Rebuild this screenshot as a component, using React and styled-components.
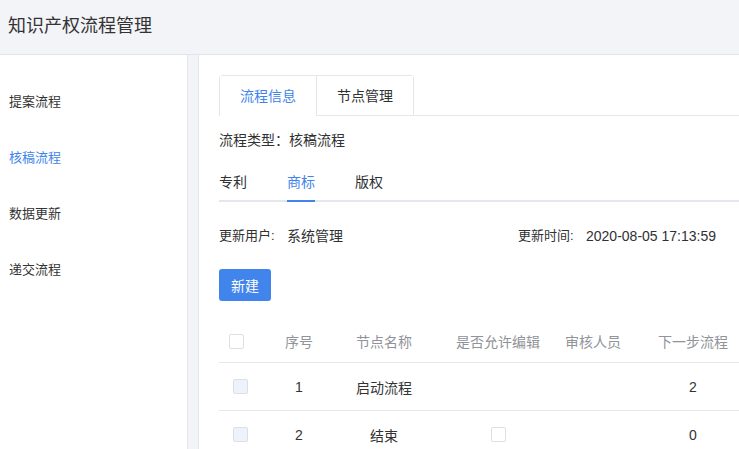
import React, { useState } from 'react';
import styled, { createGlobalStyle } from 'styled-components';

const GlobalStyle = createGlobalStyle`
  html, body {
    margin: 0;
    padding: 0;
    background: #f3f4f8;
    font-family: "Liberation Sans", "Noto Sans CJK SC", sans-serif;
    color: #303133;
    overflow: hidden;
  }
`;

const Page = styled.div`
  width: 739px;
  height: 449px;
  overflow: hidden;
  display: flex;
  flex-direction: column;
`;

const Header = styled.header`
  height: 55px;
  flex: none;
  border-bottom: 1px solid #e3e4e8;
  display: flex;
  align-items: center;
  padding: 0 8px 7px;
  box-sizing: border-box;
  font-size: 18px;
  color: #333;
`;

const Body = styled.div`
  flex: 1;
  display: flex;
  gap: 10px;
  min-height: 0;
`;

const Sidebar = styled.nav`
  width: 188px;
  flex: none;
  background: #fff;
  border-right: 1px solid #e6e6ea;
  padding-top: 19px;
  box-sizing: border-box;
`;

const NavItem = styled.div`
  height: 56px;
  line-height: 56px;
  padding-left: 9px;
  font-size: 13px;
  color: ${p => (p.$active ? '#4084ec' : '#333')};
  cursor: pointer;
`;

const Main = styled.main`
  flex: 1;
  min-width: 0;
  background: #fff;
  border-left: 1px solid #e6e6ea;
  padding: 20px 0 0 20px;
  overflow: hidden;
`;

const CardTabs = styled.div`
  display: flex;
  border-bottom: 1px solid #e4e7ed;
  height: 40px;
  margin-right: -20px;
`;

const CardTabGroup = styled.div`
  display: flex;
  border: 1px solid #e4e7ed;
  border-bottom: none;
  border-radius: 4px 4px 0 0;
  height: 40px;
  box-sizing: border-box;
`;

const CardTab = styled.div`
  width: 96px;
  height: 40px;
  box-sizing: border-box;
  text-align: center;
  line-height: 40px;
  font-size: 14px;
  color: ${p => (p.$active ? '#4084ec' : '#303133')};
  background: #fff;
  border-left: ${p => (p.$first ? 'none' : '1px solid #e4e7ed')};
  margin-bottom: ${p => (p.$active ? '0' : '-1px')};
  cursor: pointer;
  & + & {
    width: 97px;
    border-bottom: 1px solid #e4e7ed;
  }
`;

const TypeLine = styled.div`
  margin-top: 14px;
  font-size: 14px;
  line-height: 20px;
  color: #303133;
`;

const SubTabs = styled.div`
  margin-top: 14px;
  display: flex;
  gap: 40px;
  border-bottom: 2px solid #e4e7ed;
  margin-right: -20px;
`;

const SubTab = styled.div`
  width: 28px;
  height: 36px;
  line-height: 36px;
  font-size: 14px;
  color: ${p => (p.$active ? '#4084ec' : '#303133')};
  border-bottom: 2px solid ${p => (p.$active ? '#4084ec' : 'transparent')};
  margin-bottom: -2px;
  white-space: nowrap;
  cursor: pointer;
`;

const InfoRow = styled.div`
  margin-top: 24px;
  display: grid;
  grid-template-columns: 299px auto;
  font-size: 13px;
  line-height: 20px;
`;

const InfoItem = styled.div`
  display: flex;
  white-space: nowrap;
`;

const InfoLabel = styled.span`
  width: 68px;
  color: #303133;
`;

const InfoValue = styled.span`
  color: #303133;
  font-size: 14px;
`;

const Button = styled.button`
  margin-top: 23px;
  width: 52px;
  height: 32px;
  border: none;
  border-radius: 3px;
  background: #4084ec;
  color: #fff;
  font-family: inherit;
  font-size: 14px;
  cursor: pointer;
  display: block;
`;

const Table = styled.div`
  margin-top: 18px;
  width: 600px;
`;

const Row = styled.div`
  display: grid;
  grid-template-columns: 40px 80px 90px 138px 52px 148px 52px;
  height: ${p => (p.$head ? '44px' : '48px')};
  border-bottom: 1px solid #e6e8ec;
  box-sizing: border-box;
  font-size: 14px;
  color: ${p => (p.$head ? '#909399' : '#333')};
`;

const Cell = styled.div`
  display: flex;
  align-items: center;
  justify-content: center;
  white-space: nowrap;
  padding-top: ${p => (p.$head ? '1px' : '0')};
`;

const Check = styled.span`
  display: inline-block;
  width: 13px;
  height: 13px;
  border: 1px solid #dcdfe6;
  border-radius: 2px;
  background: ${p => (p.$disabled ? '#edf2fc' : '#fff')};
  margin-left: ${p => p.$shift || 0}px;
`;

const rows = [
  { no: 1, name: '启动流程', edit: false, next: 2 },
  { no: 2, name: '结束', edit: true, next: 0 },
];

export default function App() {
  const [nav, setNav] = useState(1);
  const [tab, setTab] = useState(0);
  const [sub, setSub] = useState(1);
  const navs = ['提案流程', '核稿流程', '数据更新', '递交流程'];
  const subs = ['专利', '商标', '版权'];

  return (
    <Page>
      <GlobalStyle />
      <Header>知识产权流程管理</Header>
      <Body>
        <Sidebar>
          {navs.map((n, i) => (
            <NavItem key={n} $active={nav === i} onClick={() => setNav(i)}>{n}</NavItem>
          ))}
        </Sidebar>
        <Main>
          <CardTabs>
            <CardTabGroup>
              <CardTab $first $active={tab === 0} onClick={() => setTab(0)}>流程信息</CardTab>
              <CardTab $active={tab === 1} onClick={() => setTab(1)}>节点管理</CardTab>
            </CardTabGroup>
          </CardTabs>
          <TypeLine>流程类型：核稿流程</TypeLine>
          <SubTabs>
            {subs.map((s, i) => (
              <SubTab key={s} $active={sub === i} onClick={() => setSub(i)}>{s}</SubTab>
            ))}
          </SubTabs>
          <InfoRow>
            <InfoItem>
              <InfoLabel>更新用户:</InfoLabel>
              <InfoValue>系统管理</InfoValue>
            </InfoItem>
            <InfoItem>
              <InfoLabel>更新时间:</InfoLabel>
              <InfoValue>2020-08-05 17:13:59</InfoValue>
            </InfoItem>
          </InfoRow>
          <Button>新建</Button>
          <Table>
            <Row $head>
              <Cell $head><Check $shift={-6} /></Cell>
              <Cell $head>序号</Cell>
              <Cell $head>节点名称</Cell>
              <Cell $head>是否允许编辑</Cell>
              <Cell $head>审核人员</Cell>
              <Cell $head>下一步流程</Cell>
              <Cell $head />
            </Row>
            {rows.map(r => (
              <Row key={r.no}>
                <Cell><Check $disabled $shift={2} /></Cell>
                <Cell>{r.no}</Cell>
                <Cell>{r.name}</Cell>
                <Cell>{r.edit && <Check />}</Cell>
                <Cell />
                <Cell>{r.next}</Cell>
                <Cell />
              </Row>
            ))}
          </Table>
        </Main>
      </Body>
    </Page>
  );
}
